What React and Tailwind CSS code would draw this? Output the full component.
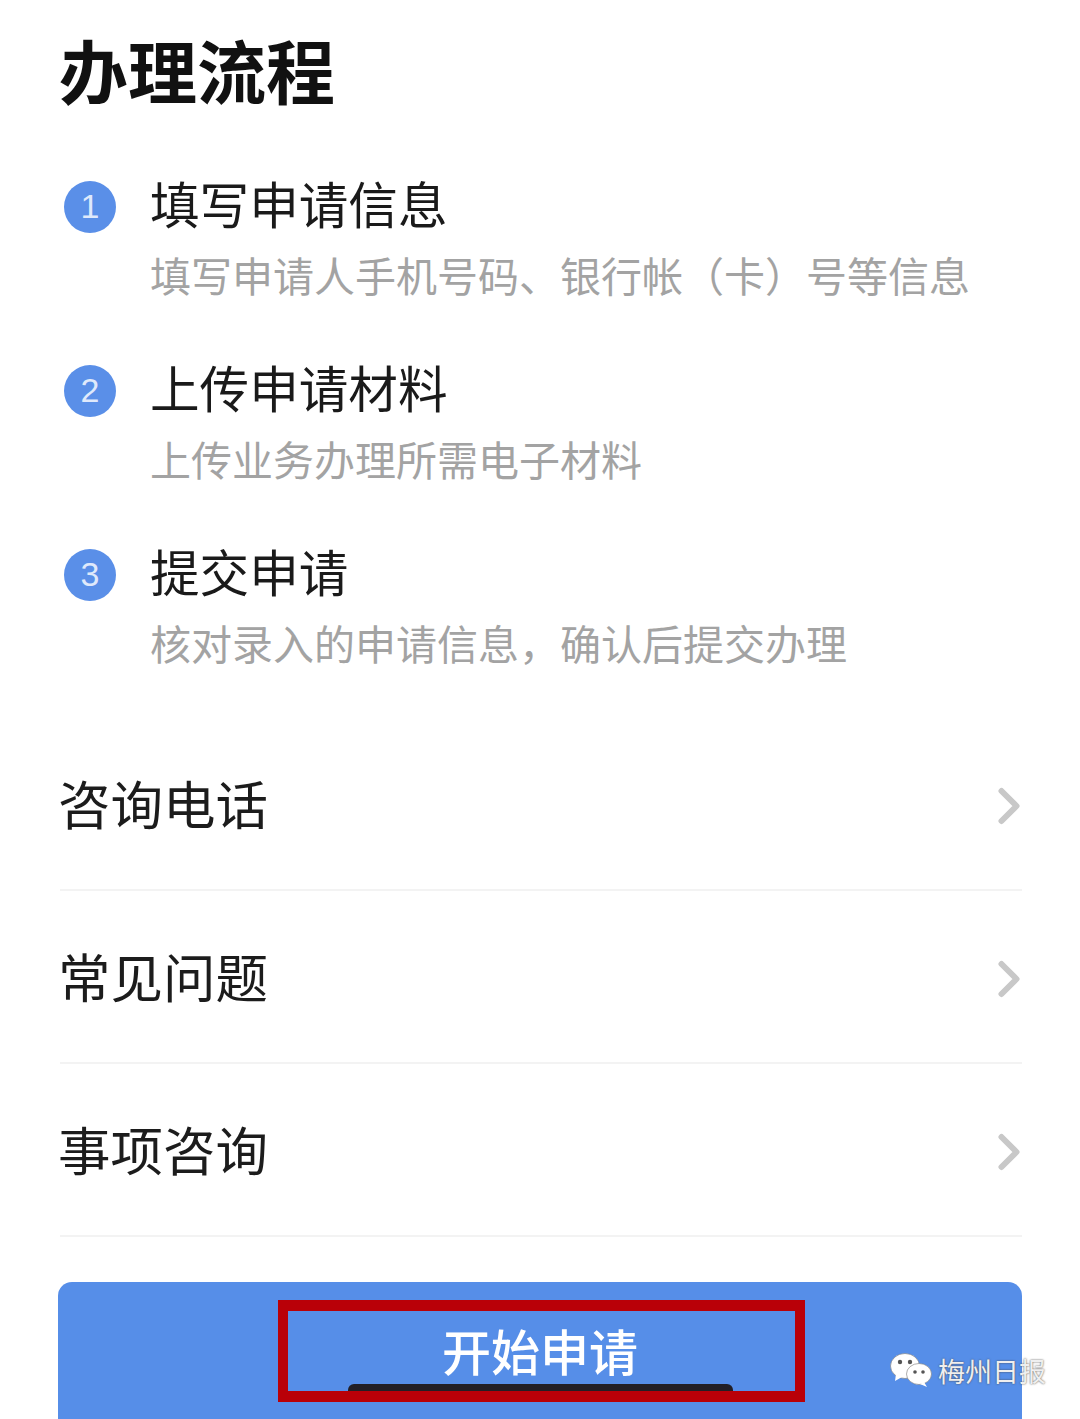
import React from 'react';
import { ChevronRight } from 'lucide-react';

const cjk = { fontFamily: '"Noto Sans CJK SC", "Liberation Sans", sans-serif' };

const steps = [
  { id: 1, title: '填写申请信息', desc: '填写申请人手机号码、银行帐（卡）号等信息' },
  { id: 2, title: '上传申请材料', desc: '上传业务办理所需电子材料' },
  { id: 3, title: '提交申请', desc: '核对录入的申请信息，确认后提交办理' },
];

const links = ['咨询电话', '常见问题', '事项咨询'];

// WeChat watermark logo
const WechatMark = () => (
  <svg width="42" height="36" viewBox="0 0 42 36">
    <ellipse cx="15" cy="14" rx="14.5" ry="12.5" fill="#fff" stroke="#777" strokeWidth="0.6" />
    <path d="M6 22 L5 29 L12 25 Z" fill="#fff" />
    <ellipse cx="29" cy="22" rx="12.5" ry="10.5" fill="#fff" stroke="#777" strokeWidth="0.6" />
    <path d="M34 30 L37 35 L30 32 Z" fill="#fff" />
    <circle cx="10" cy="10" r="2.2" fill="#555" />
    <circle cx="20" cy="10" r="2.2" fill="#555" />
    <circle cx="25" cy="20" r="1.8" fill="#555" />
    <circle cx="33" cy="20" r="1.8" fill="#555" />
  </svg>
);

const Step = ({ step }) => (
  <div className="flex h-[184px] items-start">
    <div className="mt-[13px] ml-[6px] flex h-[52px] w-[52px] shrink-0 items-center justify-center rounded-full bg-[#5a8fe8] pb-[3px] text-[34px] font-light leading-none text-[#dfe9fb]" style={{ fontFamily: '"Liberation Sans", sans-serif' }}>
      {step.id}
    </div>
    <div className="ml-[34px] -mt-[2px]">
      <div className="h-[72px] text-[49.6px] leading-[72px] text-[#1a1a1a]">{step.title}</div>
      <div className="h-[72px] whitespace-nowrap text-[41px] leading-[72px] text-[#a3a3a3]">{step.desc}</div>
    </div>
  </div>
);

const LinkRow = ({ label }) => (
  <div className="ml-[2px] flex h-[173px] items-center justify-between border-b-2 border-[#f3f3f3]">
    <span className="-mt-[2px] -ml-[2px] text-[52.5px] text-[#1c1c1c]">{label}</span>
    <ChevronRight size={60} strokeWidth={2.4} className="mt-[4px] -mr-[17px] text-[#c8c8c8]" />
  </div>
);

export default function App() {
  return (
    <div className="relative h-[1419px] w-[1080px] overflow-hidden bg-white" style={cjk}>
      <div className="px-[58px]">
        <h1 className="flex h-[168px] items-center pb-[28px] pl-[1px] text-[69px] font-bold text-[#111]">办理流程</h1>
        <div>
          {steps.map((step) => (
            <Step key={step.id} step={step} />
          ))}
        </div>
        <div className="mt-[-2px]">
          {links.map((label) => (
            <LinkRow key={label} label={label} />
          ))}
        </div>
        <div className="mt-[45px] flex h-[160px] justify-center rounded-[14px] bg-[#568ee8] pt-[35px]">
          <span className="text-[49px] font-medium leading-[66px] text-white">开始申请</span>
        </div>
      </div>

      {/* Red highlight box over the button */}
      <div className="absolute left-[278px] top-[1300px] h-[102px] w-[527px] border-x-[10px] border-y-[11px] border-[#b90008]" />
      <div className="absolute left-[348px] top-[1384px] h-[7px] w-[385px] rounded-t-[6px] bg-[#221f26]" />

      {/* Watermark */}
      <div className="absolute left-[890px] top-[1352px] flex items-center gap-[6px]">
        <WechatMark />
        <span className="text-[27px] leading-none text-[#efefef] [text-shadow:0_0_2px_#444]">梅州日报</span>
      </div>
    </div>
  );
}
